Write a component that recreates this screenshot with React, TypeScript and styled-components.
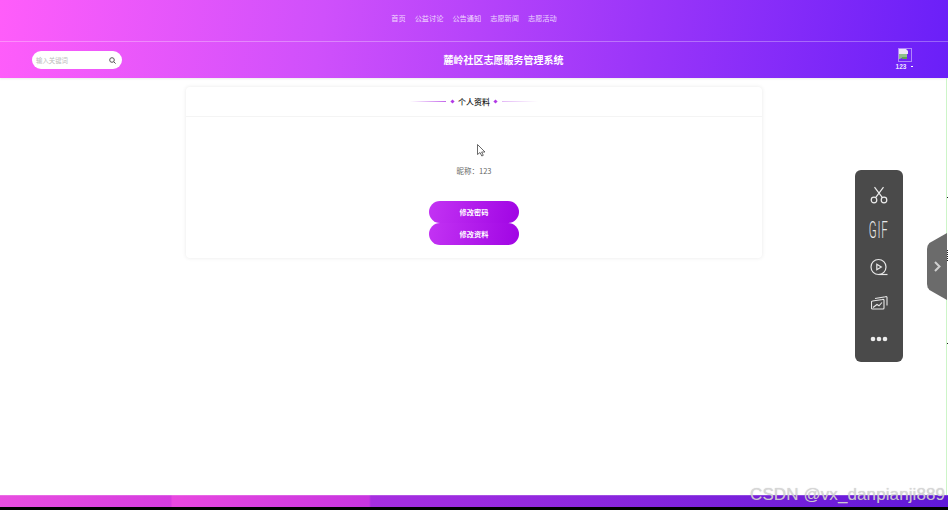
import React, { FC } from 'react';
import styled, { createGlobalStyle } from 'styled-components';

const cjk = `"Noto Sans CJK SC", "Liberation Sans", sans-serif`;

const GlobalStyle = createGlobalStyle`
  html, body {
    margin: 0;
    padding: 0;
    height: 510px;
    overflow: hidden;
    background: #fff;
    font-family: ${cjk};
  }
`;

const Page = styled.div`
  position: relative;
  height: 510px;
  display: flex;
  flex-direction: column;
  overflow: hidden;
`;

const Header = styled.header`
  height: 78px;
  flex: none;
  background: linear-gradient(98deg, #ff5dfa 0%, #cf50fb 34%, #9a35f9 68%, #6a1ff8 100%);
  box-shadow: 0 1px 2px rgba(0, 0, 0, 0.08);
`;

const TopNav = styled.nav`
  height: 42px;
  box-sizing: border-box;
  padding-bottom: 6px;
  border-bottom: 1px solid rgba(255, 255, 255, 0.3);
  display: flex;
  justify-content: center;
  align-items: center;
  gap: 9px;
`;

const NavLink = styled.a`
  font-size: 7.2px;
  line-height: 10px;
  color: rgba(255, 255, 255, 0.8);
  white-space: nowrap;
`;

const HeaderRow = styled.div`
  height: 36px;
  padding: 0 32px;
  display: flex;
  justify-content: space-between;
  align-items: center;
`;

const SearchBox = styled.div`
  width: 90px;
  height: 18px;
  box-sizing: border-box;
  padding: 0 6px 0 4px;
  background: #fff;
  border-radius: 9px;
  display: flex;
  justify-content: space-between;
  align-items: center;
`;

const SearchHint = styled.span`
  font-size: 6.4px;
  color: #bbb;
`;

const SiteTitle = styled.h1`
  margin: 0;
  font-size: 10px;
  line-height: 14px;
  font-weight: 700;
  color: #fff;
  white-space: nowrap;
`;

const UserBlock = styled.div`
  width: 31px;
  margin-bottom: 1px;
  display: flex;
  flex-direction: column;
  align-items: center;
  padding-left: 8px;
  box-sizing: border-box;
`;

const BrokenAvatar = styled.div`
  width: 14px;
  height: 14px;
  box-sizing: border-box;
  border: 1px solid rgba(255, 255, 255, 0.45);
  display: flex;
`;

const UserName = styled.div`
  display: flex;
  align-items: center;
  gap: 5px;
  font-size: 6.5px;
  line-height: 9px;
  font-weight: 700;
  color: rgba(255, 255, 255, 0.9);
  white-space: nowrap;
  font-family: "Liberation Sans", sans-serif;
`;

const Caret = styled.span`
  width: 2px;
  height: 1px;
  background: #fff;
`;

const Main = styled.main`
  flex: 1;
  padding-top: 9px;
  display: flex;
  justify-content: center;
  align-items: flex-start;
`;

const Card = styled.section`
  width: 576px;
  height: 171px;
  background: #fff;
  border-radius: 4px;
  box-shadow: 0 0 4px rgba(0, 0, 0, 0.09);
`;

const CardHead = styled.div`
  height: 30px;
  box-sizing: border-box;
  border-bottom: 1px solid #f4f4f4;
  display: flex;
  justify-content: center;
  align-items: center;
  gap: 3px;
`;

const TitleLine = styled.i<{ $reverse?: boolean; $faint?: boolean }>`
  width: 36px;
  height: 1px;
  margin: 0 2px;
  opacity: ${(p) => (p.$faint ? 0.4 : 0.85)};
  background: linear-gradient(${(p) => (p.$reverse ? '270deg' : '90deg')}, transparent, #b94ce8);
`;

const Diamond = styled.i`
  width: 3px;
  height: 3px;
  background: #b23ae6;
  transform: rotate(45deg);
`;

const CardTitle = styled.h2`
  margin: 0 1px;
  font-size: 8px;
  line-height: 11px;
  font-weight: 500;
  color: #222;
  white-space: nowrap;
`;

const CardBody = styled.div`
  padding-top: 48px;
  display: flex;
  flex-direction: column;
  align-items: center;
`;

const Nickname = styled.p`
  margin: 0 0 24px;
  font-size: 7.5px;
  line-height: 12px;
  color: #666;
  white-space: nowrap;
`;

const ActionButton = styled.button`
  width: 90px;
  height: 22px;
  padding: 0;
  border: none;
  border-radius: 11px;
  background: linear-gradient(100deg, #c333f3 0%, #a005e4 100%);
  color: #fff;
  font-family: ${cjk};
  font-size: 7.2px;
  font-weight: 700;
`;

const BottomBar = styled.footer`
  height: 12px;
  flex: none;
  background: linear-gradient(
    90deg,
    #e84ee0 0,
    #d63ce0 171px,
    #e848e0 172px,
    #c835e0 369px,
    #a72ee0 371px,
    #9b2be0 474px,
    #5f18d8 100%
  );
  border-top: 1px solid rgba(255, 255, 255, 0.18);
  box-sizing: border-box;
`;

const BlackStrip = styled.div`
  height: 3px;
  flex: none;
  background: #000;
`;

const RightEdge = styled.div`
  position: absolute;
  top: 78px;
  left: 946px;
  width: 1px;
  height: 417px;
  background: #cdf5c8;
`;

const EdgeTick = styled.i<{ $top: number; $tall?: boolean }>`
  position: absolute;
  left: 947px;
  top: ${(p) => p.$top}px;
  width: 1px;
  height: ${(p) => (p.$tall ? 12 : 1)}px;
  background: ${(p) =>
    p.$tall ? 'repeating-linear-gradient(180deg, #222 0 1px, #fff 1px 2px)' : '#222'};
`;

const CaptureBar = styled.div`
  position: absolute;
  left: 855px;
  top: 170px;
  width: 48px;
  height: 192px;
  padding: 7px 0;
  box-sizing: border-box;
  background: #4a4a4a;
  border-radius: 6px;
  display: flex;
  flex-direction: column;
  align-items: center;
`;

const ToolSlot = styled.div`
  height: 36px;
  width: 100%;
  flex: none;
  display: flex;
  justify-content: center;
  align-items: center;
`;

const GifLabel = styled.span`
  font-family: Roboto, "Liberation Sans", sans-serif;
  font-size: 23px;
  font-weight: 300;
  line-height: 24px;
  letter-spacing: 1.5px;
  color: #e8e8e8;
  transform: scaleX(0.5);
`;

const SideTab = styled.div`
  position: absolute;
  left: 927px;
  top: 233px;
  width: 20px;
  height: 67px;
  background: #6b6b6b;
  clip-path: polygon(100% 0, 12% 15%, 3% 19%, 0 24%, 0 76%, 3% 81%, 12% 85%, 100% 100%);
  display: flex;
  justify-content: center;
  align-items: center;
  box-sizing: border-box;
`;

const Pointer = styled.svg`
  position: absolute;
  left: 477px;
  top: 144px;
`;

const Watermark = styled.div`
  position: absolute;
  left: 750px;
  top: 484px;
  font-family: "Liberation Sans", sans-serif;
  font-size: 17px;
  line-height: 22px;
  letter-spacing: 0.1px;
  color: rgba(215, 215, 215, 0.9);
  text-shadow: 0 0 1px rgba(130, 130, 130, 0.45);
  white-space: nowrap;
`;

const navItems = ['首页', '公益讨论', '公告通知', '志愿新闻', '志愿活动'];

const ScissorsIcon: FC = () => (
  <svg width="18" height="18" viewBox="0 0 18 18" fill="none" stroke="#ececec" strokeWidth="1.2">
    <circle cx="4" cy="14" r="2.8" />
    <circle cx="14" cy="14" r="2.8" />
    <path d="M5.600 11.700 13.500 1.200M12.400 11.700 4.500 1.200" />
  </svg>
);

const VideoIcon: FC = () => (
  <svg width="18" height="18" viewBox="0 0 18 18" fill="none" stroke="#e8e8e8" strokeWidth="1.2">
    <circle cx="8.500" cy="9" r="7.500" />
    <path d="M8.500 16.500H17.500" />
    <path d="M6.800 6.300 11.300 9 6.800 11.700Z" />
  </svg>
);

const PictureIcon: FC = () => (
  <svg width="17" height="14" viewBox="0 0 17 14" fill="none" stroke="#e8e8e8" strokeWidth="1.1">
    <path d="M1.500 5 11.500 3.500A1 1 0 0 1 13 4.500V12A1 1 0 0 1 12 13H1.500A1 1 0 0 1 0.500 12V6A1 1 0 0 1 1.500 5Z" />
    <path d="M4 2.500 14.500 0.700A1 1 0 0 1 16 1.700V9.500" />
    <path d="M2 11.500 6 8.500l2 1.300 3-3.300" />
  </svg>
);

const MoreIcon: FC = () => (
  <svg width="18" height="6" viewBox="0 0 18 6" fill="#ececec">
    <circle cx="3" cy="3" r="2.3" />
    <circle cx="9" cy="3" r="2.3" />
    <circle cx="15" cy="3" r="2.3" />
  </svg>
);

const App: FC = () => (
  <Page>
    <GlobalStyle />
    <Header>
      <TopNav>
        {navItems.map((item) => (
          <NavLink key={item}>{item}</NavLink>
        ))}
      </TopNav>
      <HeaderRow>
        <SearchBox>
          <SearchHint>输入关键词</SearchHint>
          <svg width="7" height="7" viewBox="0 0 7 7" fill="none" stroke="#555" strokeWidth="1">
            <circle cx="3" cy="3" r="2.3" />
            <path d="M4.800 4.800 6.600 6.600" />
          </svg>
        </SearchBox>
        <SiteTitle>麓岭社区志愿服务管理系统</SiteTitle>
        <UserBlock>
          <BrokenAvatar>
            <svg width="12" height="12" viewBox="0 0 12 12">
              <path d="M0 0h7l2 2v3H0Z" fill="#ece6f6" />
              <path d="M0 5h8v3H4L1 10H0Z" fill="#8fc08a" />
              <path d="M3 8h5v2H3Z" fill="#5f9f5c" />
            </svg>
          </BrokenAvatar>
          <UserName>
            123
            <Caret />
          </UserName>
        </UserBlock>
      </HeaderRow>
    </Header>

    <Main>
      <Card>
        <CardHead>
          <TitleLine />
          <Diamond />
          <CardTitle>个人资料</CardTitle>
          <Diamond />
          <TitleLine $reverse $faint />
        </CardHead>
        <CardBody>
          <Nickname>昵称：123</Nickname>
          <ActionButton>修改密码</ActionButton>
          <ActionButton>修改资料</ActionButton>
        </CardBody>
      </Card>
    </Main>

    <BottomBar />
    <BlackStrip />

    <RightEdge />
    <EdgeTick $top={197} />
    <EdgeTick $top={250} $tall />
    <EdgeTick $top={343} />
    <CaptureBar>
      <ToolSlot>
        <ScissorsIcon />
      </ToolSlot>
      <ToolSlot>
        <GifLabel>GIF</GifLabel>
      </ToolSlot>
      <ToolSlot>
        <VideoIcon />
      </ToolSlot>
      <ToolSlot>
        <PictureIcon />
      </ToolSlot>
      <ToolSlot>
        <MoreIcon />
      </ToolSlot>
    </CaptureBar>
    <SideTab>
      <svg width="7" height="11" viewBox="0 0 7 11" fill="none" stroke="#d0d0d0" strokeWidth="2">
        <path d="M1 1l4.500 4.500L1 10" />
      </svg>
    </SideTab>
    <Pointer width="9" height="13" viewBox="0 0 9 13">
      <path d="M0.500 0.500V10.500L3 8.500 4.800 12 6.300 11.300 4.600 8H8Z" fill="#fff" stroke="#444" strokeWidth="0.8" />
    </Pointer>
    <Watermark>CSDN @vx_danpianji889</Watermark>
  </Page>
);

export default App;
